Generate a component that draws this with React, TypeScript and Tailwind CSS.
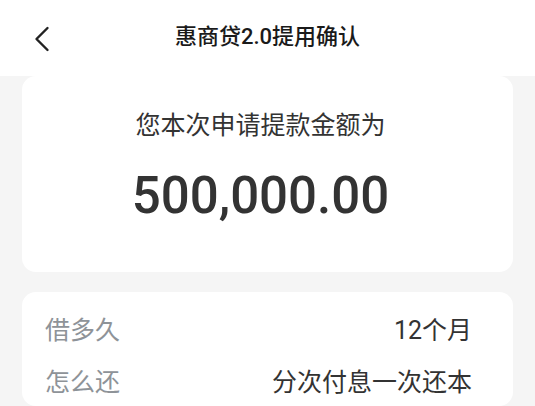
import React from "react";

const font = { fontFamily: 'Roboto, "Noto Sans CJK SC", "Noto Sans", sans-serif' };

export default function App() {
  return (
    <div
      className="w-[535px] h-[406px] bg-[#f5f5f5] overflow-hidden flex flex-col"
      style={font}
    >
      <div className="h-[76px] bg-white grid grid-cols-[1fr_auto_1fr] items-center shrink-0">
        <div className="pl-[34px] flex items-center pt-[2px]">
          <svg width="16" height="26" viewBox="0 0 16 26" fill="none">
            <path
              d="M13.5 2 L2.5 13 L13.5 24"
              stroke="#222"
              strokeWidth="2.4"
              strokeLinecap="round"
              strokeLinejoin="round"
            />
          </svg>
        </div>
        <div className="text-[22px] text-[#1a1a1a] leading-none pb-[2px] font-medium">
          惠商贷2.0提用确认
        </div>
        <div />
      </div>

      <div className="mx-[22px] bg-white rounded-[14px] h-[196px] flex flex-col items-center shrink-0 pr-[14px]">
        <div className="mt-[36px] text-[25px] leading-[28px] text-[#333]">
          您本次申请提款金额为
        </div>
        <div className="mt-[26px] text-[51px] leading-[60px] font-medium text-[#333]">
          500,000.00
        </div>
      </div>

      <div className="mx-[22px] mt-[20px] bg-white rounded-[14px] flex-1 pl-[23px] pr-[41px] pt-[24px] flex flex-col gap-[24px]">
        <div className="flex justify-between items-center h-[28px]">
          <span className="text-[25px] text-[#8e9398] leading-none">借多久</span>
          <span className="text-[25px] text-[#333] leading-none">12个月</span>
        </div>
        <div className="flex justify-between items-center h-[28px]">
          <span className="text-[25px] text-[#8e9398] leading-none">怎么还</span>
          <span className="text-[25px] text-[#333] leading-none">分次付息一次还本</span>
        </div>
      </div>
    </div>
  );
}
